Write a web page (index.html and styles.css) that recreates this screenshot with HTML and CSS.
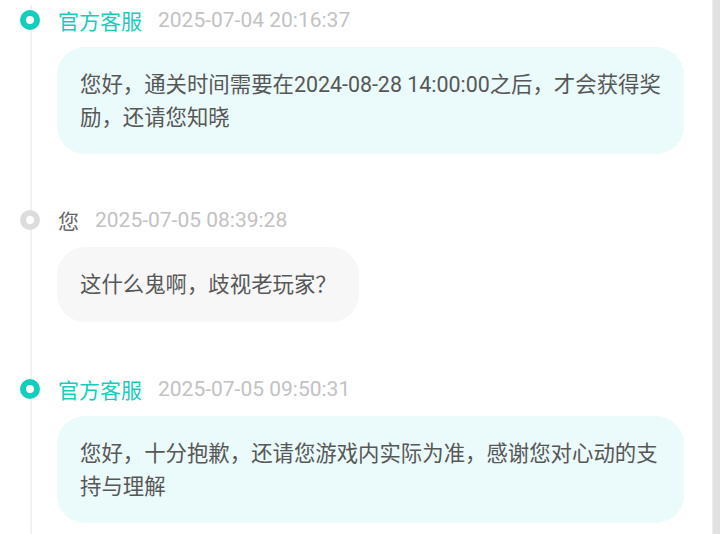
FILE: index.html
```html
<!DOCTYPE html>
<html lang="zh-CN">
<head>
<meta charset="utf-8">
<title>客服记录</title>
<link rel="stylesheet" href="styles.css">
</head>
<body>
<div class="page">
  <div class="main">
    <div class="timeline">
      <div class="item">
        <div class="head">
          <span class="dot dot-staff"></span>
          <span class="name name-staff">官方客服</span>
          <span class="time">2025-07-04 20:16:37</span>
        </div>
        <div class="bubble bubble-staff">您好，通关时间需要在2024-08-28 14:00:00之后，才会获得奖励，还请您知晓</div>
      </div>
      <div class="item">
        <div class="head">
          <span class="dot dot-user"></span>
          <span class="name name-user">您</span>
          <span class="time">2025-07-05 08:39:28</span>
        </div>
        <div class="bubble bubble-user">这什么鬼啊，歧视老玩家？</div>
      </div>
      <div class="item">
        <div class="head">
          <span class="dot dot-staff"></span>
          <span class="name name-staff">官方客服</span>
          <span class="time">2025-07-05 09:50:31</span>
        </div>
        <div class="bubble bubble-staff">您好，十分抱歉，还请您游戏内实际为准，感谢您对心动的支持与理解</div>
      </div>
    </div>
  </div>
  <div class="scrollbar"></div>
</div>
</body>
</html>
```

FILE: styles.css
```css
html, body {
  margin: 0;
  padding: 0;
  background: #ffffff;
  height: 100%;
  overflow: hidden;
}
body {
  font-family: Roboto, "Noto Sans CJK SC", sans-serif;
}
.page {
  display: flex;
  height: 534px;
}
.main {
  flex: 1;
  padding: 5px 28px 0 30px;
  overflow: hidden;
}
.scrollbar {
  width: 7px;
  background: #e2e2e2;
  border-left: 1px solid #ededed;
}
.timeline {
  border-left: 2px solid #f1f1f1;
  padding-left: 25px;
  min-height: 600px;
}
.item {
  padding-bottom: 51px;
}
.item + .item + .item {
  margin-top: 1px;
}
.head {
  position: relative;
  display: flex;
  align-items: center;
  height: 30px;
  margin-bottom: 12px;
}
.dot {
  position: absolute;
  left: -37px;
  top: 5px;
  width: 8px;
  height: 8px;
  border-radius: 50%;
  border: 6px solid #13cdbd;
  background: #ffffff;
}
.dot-user {
  border-color: #dcdcdc;
}
.name {
  font-size: 21px;
  margin-left: 1px;
}
.name-staff {
  color: #16ccbd;
}
.name-user {
  color: #666666;
}
.time {
  font-size: 21px;
  color: #c2c2c2;
  margin-left: 16px;
}
.bubble {
  font-size: 21.4px;
  line-height: 33px;
  color: #575757;
  padding: 21px 21px 20px 23px;
  border-radius: 28px;
}
.bubble-staff {
  background: #ebfafa;
}
.bubble-user {
  background: #f7f7f7;
  width: fit-content;
  padding: 21px 22px 21px 23px;
}
```
